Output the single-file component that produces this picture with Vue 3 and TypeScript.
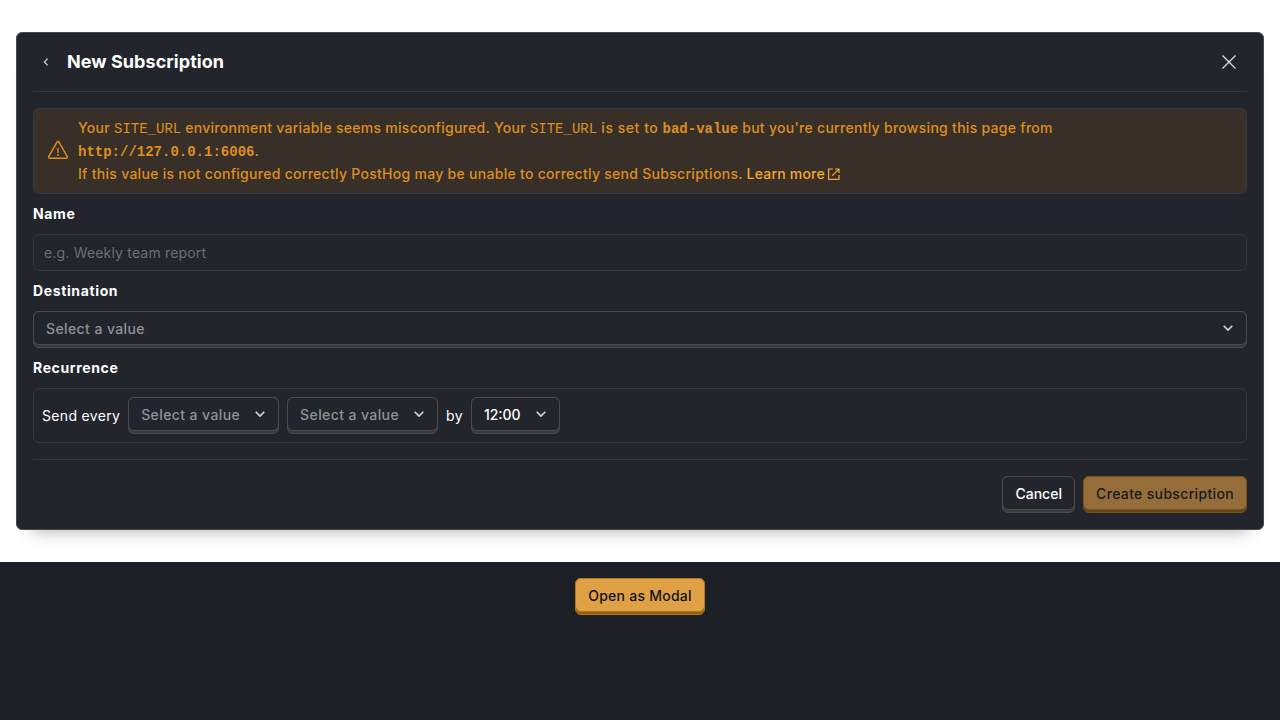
<script setup lang="ts">
import { ref } from 'vue'

const name = ref('')
const siteUrl = 'bad-value'
const currentUrl = 'http://127.0.0.1:6006'
const recurrence = [
  { id: 'interval', label: 'Select a value', placeholder: true },
  { id: 'frequency', label: 'Select a value', placeholder: true },
]
</script>

<template>
  <div class="page">
    <div class="stage">
      <section class="modal">
        <header class="modal-header">
          <button class="back" aria-label="Back">
            <svg viewBox="0 0 12 12" width="12" height="12"><path d="M7.6 2.7 4.4 6l3.2 3.3" /></svg>
          </button>
          <h3>New Subscription</h3>
          <button class="close" aria-label="Close">
            <svg viewBox="0 0 16 16" width="16" height="16"><path d="M1.5 1.5l13 13M14.5 1.5l-13 13" /></svg>
          </button>
        </header>

        <div class="modal-body">
          <div class="banner">
            <svg class="warning" viewBox="0 0 22 20" width="22" height="20">
              <path class="line" d="M10 2.1 1.7 16.6a1.15 1.15 0 0 0 1 1.7h16.6a1.15 1.15 0 0 0 1-1.7L12 2.1a1.15 1.15 0 0 0-2 0Z" />
              <path class="line" d="M11 7.9v5" />
              <circle cx="11" cy="15" r="0.95" />
            </svg>
            <div class="banner-text">
              Your <code>SITE_URL</code> environment variable seems misconfigured. Your <code>SITE_URL</code>
              <span class="loose"> is set to </span>
              <b><code>{{ siteUrl }}</code></b> but you're currently browsing this page from
              <b><code>{{ currentUrl }}</code></b>.<br />
              If this value is not configured correctly PostHog may be unable to correctly send Subscriptions.
              <a class="link">Learn more<svg viewBox="0 0 14 14" width="14" height="14"><path d="M6 2H1.6v10.4H12V8M8 2h4v4M12 2 5.1 8.9" /></svg></a>
            </div>
          </div>

          <label class="name-label" for="sub-name">Name</label>
          <input id="sub-name" v-model="name" class="input" placeholder="e.g. Weekly team report" />

          <label>Destination</label>
          <button class="button select wide muted">
            <span>Select a value</span>
            <svg class="chevron" viewBox="0 0 12 12" width="12" height="12"><path d="M1.7 3.7 6 8l4.3-4.3" /></svg>
          </button>

          <label>Recurrence</label>
          <div class="recurrence">
            <span class="word">Send every</span>
            <button v-for="item in recurrence" :key="item.id" class="button select" :class="{ muted: item.placeholder }">
              <span>{{ item.label }}</span>
              <svg class="chevron" viewBox="0 0 12 12" width="12" height="12"><path d="M1.7 3.7 6 8l4.3-4.3" /></svg>
            </button>
            <span class="word">by</span>
            <button class="button select">
              <span>12:00</span>
              <svg class="chevron" viewBox="0 0 12 12" width="12" height="12"><path d="M1.7 3.7 6 8l4.3-4.3" /></svg>
            </button>
          </div>
        </div>

        <footer class="modal-footer">
          <button class="button cancel">Cancel</button>
          <button class="button primary disabled">Create subscription</button>
        </footer>
      </section>
    </div>
    <div class="launcher">
      <button class="button primary">Open as Modal</button>
    </div>
  </div>
</template>

<style>
body {
  background: #1d1f27;
}
</style>

<style scoped>
.page {
  min-height: 720px;
  background: #1d1f27;
  color: #fff;
  font-family: Inter, 'Liberation Sans', sans-serif;
  font-size: 14px;
  line-height: 20px;
}
.page *, .page *::before {
  box-sizing: border-box;
}
.stage {
  padding: 32px 16px;
  background: #fff;
}
.modal {
  height: 498px;
  padding: 0 16px;
  border: 1px solid #46484f;
  border-radius: 6px;
  background: #22252c;
  box-shadow: 0 16px 16px -16px rgba(0, 0, 0, 0.35);
}
button {
  margin: 0;
  padding: 0;
  border: 0;
  background: none;
  color: inherit;
  font: inherit;
}
svg {
  display: block;
  flex: none;
  fill: none;
  stroke: currentColor;
}
.modal-header {
  display: flex;
  align-items: center;
  height: 59px;
  border-bottom: 1px solid #35373e;
}
.modal-header h3 {
  flex: 1;
  margin: 0 0 0 8px;
  font-size: 18px;
  font-weight: 700;
  line-height: 28px;
  letter-spacing: 0.06px;
}
.back {
  display: flex;
  justify-content: center;
  width: 26px;
  color: #d6d6d8;
}
.back svg {
  stroke-width: 1.2;
}
.close {
  display: flex;
  justify-content: center;
  width: 36px;
  color: #dedee0;
}
.close svg {
  stroke-width: 1.3;
}
.modal-body {
  display: flex;
  flex-direction: column;
  padding: 16px 0;
}
.banner {
  display: flex;
  align-items: center;
  height: 86px;
  padding: 0 14px 0 13px;
  border: 1px solid #35373e;
  border-radius: 6px;
  background: #383028;
  color: #dd8f1f;
  font-weight: 500;
}
.warning {
  margin: 0 9px 2px 0;
}
.warning .line {
  stroke-width: 1.4;
}
.warning circle {
  fill: currentColor;
  stroke: none;
}
.banner-text {
  flex: 1;
  padding-bottom: 2px;
  line-height: 23px;
  letter-spacing: 0.285px;
}
.loose {
  letter-spacing: 0.53px;
}
code {
  font-family: 'Liberation Mono', monospace;
  font-size: 14px;
  font-weight: 400;
  line-height: 20px;
  letter-spacing: 0;
}
b code {
  font-weight: 700;
}
.link {
  color: #f5a82f;
  letter-spacing: 0.2px;
}
.link svg {
  display: inline-block;
  margin-left: 2px;
  vertical-align: -2px;
  stroke-width: 1.2;
}
label {
  height: 20px;
  margin: 10px 0;
  font-weight: 700;
  letter-spacing: 0.63px;
}
.name-label {
  letter-spacing: 0.6px;
}
.input {
  width: 100%;
  height: 37px;
  padding: 0 10px;
  border: 1px solid #35373e;
  border-radius: 6px;
  outline: none;
  background: transparent;
  color: #fff;
  font: inherit;
  letter-spacing: 0.18px;
}
.input::placeholder {
  color: #6e6e6f;
  opacity: 1;
}
.button {
  position: relative;
  display: flex;
  align-items: center;
  height: 37px;
  padding: 0 12px 2px;
  border: 1px solid #4a4a4c;
  border-radius: 6px;
  background: #3a3939;
  font-weight: 500;
  isolation: isolate;
}
.button::before {
  content: '';
  position: absolute;
  z-index: -1;
  inset: -1px -1px 2px;
  border: 1px solid #4a4a4c;
  border-radius: 6px;
  background: #22252c;
}
.button.primary {
  border-color: #b17816;
  background: #8f5f15;
  color: #111;
  letter-spacing: 0.25px;
}
.button.primary::before {
  border-color: #b17816;
  background: #e0a045;
}
.button.disabled {
  border-color: #7a5319;
  background: #644519;
  color: #1a1a1b;
  letter-spacing: 0.34px;
}
.button.disabled::before {
  border-color: #7a5319;
  background: #946d3a;
}
.cancel {
  letter-spacing: 0.03px;
}
.muted > span {
  color: #909194;
  letter-spacing: 0.4px;
}
.select {
  justify-content: space-between;
}
.chevron {
  margin-left: 14px;
  margin-top: -1px;
  color: #d5d5d7;
  stroke-width: 1.6;
}
.recurrence {
  display: flex;
  align-items: center;
  gap: 8px;
  height: 55px;
  padding: 0 8px;
  border: 1px solid #35373e;
  border-radius: 6px;
}
.word {
  letter-spacing: 0.32px;
}
.modal-footer {
  display: flex;
  justify-content: flex-end;
  gap: 8px;
  padding-top: 16px;
  border-top: 1px solid #35373e;
}
.launcher {
  display: flex;
  justify-content: center;
  padding: 16px;
}
</style>
